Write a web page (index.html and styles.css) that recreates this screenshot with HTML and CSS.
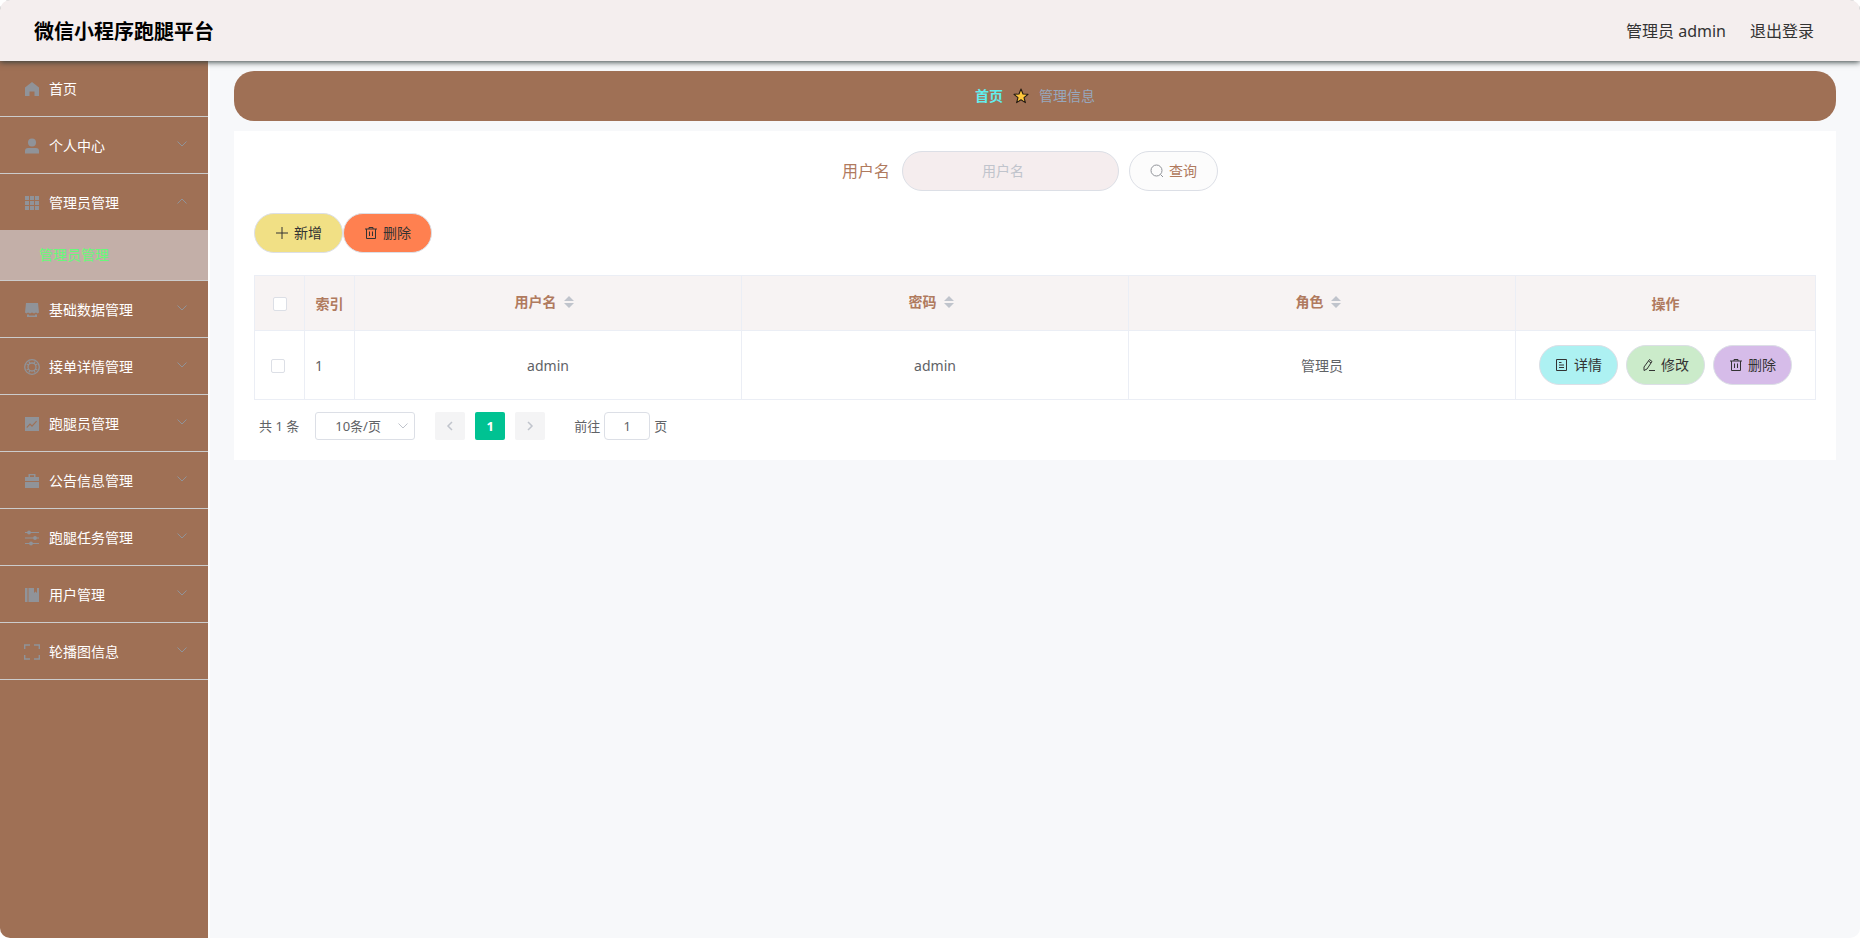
FILE: index.html
```html
<!DOCTYPE html>
<html lang="zh-CN">
<head>
<meta charset="utf-8">
<title>微信小程序跑腿平台</title>
<link rel="stylesheet" href="styles.css">
</head>
<body>
<svg class="defs" aria-hidden="true">
  <symbol id="down" viewBox="0 0 12 12"><path d="M1.500 3.500 6 8l4.500-4.500" fill="none" stroke="currentColor"/></symbol>
  <symbol id="trash" viewBox="0 0 14 14"><path d="M1 3h12M5 3V1.500h4V3M2.500 3v9.500h9V3M5.500 5.500v4.500M8.500 5.500v4.500" fill="none" stroke="currentColor"/></symbol>
</svg>
<div class="app">
  <header class="header">
    <h1 class="brand">微信小程序跑腿平台</h1>
    <div class="account"><span>管理员 admin</span><a href="#logout">退出登录</a></div>
  </header>
  <div class="layout">
    <nav class="sidebar">
      <a class="item first" href="#home"><svg class="icon" viewBox="0 0 16 16"><path d="M8 1 1 6.500V15h4.500v-4.500h5V15H15V6.500z" fill="currentColor"/></svg><span class="label">首页</span></a>
      <a class="item" href="#profile"><svg class="icon" viewBox="0 0 16 16"><circle cx="8" cy="4.500" r="4" fill="currentColor"/><path d="M1 15.500V13q0-3 3-3h8q3 0 3 3v2.500z" fill="currentColor"/></svg><span class="label">个人中心</span><svg class="arrow"><use href="#down"/></svg></a>
      <a class="item open" href="#admins"><svg class="icon" viewBox="0 0 16 16"><path d="M1 1h4v4H1zM6 1h4v4H6zM11 1h4v4h-4zM1 6h4v4H1zM6 6h4v4H6zM11 6h4v4h-4zM1 11h4v4H1zM6 11h4v4H6zM11 11h4v4h-4z" fill="currentColor"/></svg><span class="label">管理员管理</span><svg class="arrow up"><use href="#down"/></svg></a>
      <a class="subitem" href="#admin-list">管理员管理</a>
      <a class="item" href="#base"><svg class="icon" viewBox="0 0 16 16"><path d="M2 1h12l1 9.500-1.500 1-1.500-1-2 1-2-1-2 1-2-1-1.500 1L1 10.500zM3 12.500h2v1h6v-1h2V15H3z" fill="currentColor"/></svg><span class="label">基础数据管理</span><svg class="arrow"><use href="#down"/></svg></a>
      <a class="item" href="#orders"><svg class="icon" viewBox="0 0 16 16"><g fill="none" stroke="currentColor" stroke-width="1.300"><circle cx="8" cy="8" r="7.300"/><circle cx="8" cy="8" r="4"/><path d="M2.500 5 5 6M5 2.500 6 5M11 2.500 10 5M13.500 5 11 6M13.500 11 11 10M11 13.500 10 11M5 13.500 6 11M2.500 11 5 10"/></g></svg><span class="label">接单详情管理</span><svg class="arrow"><use href="#down"/></svg></a>
      <a class="item" href="#runners"><svg class="icon" viewBox="0 0 16 16"><path fill-rule="evenodd" d="M1 1h14v14H1zM3 12l3-3 2 2 5-5.500-.8-.8L8 9.300l-2-2L2.500 11z" fill="currentColor"/></svg><span class="label">跑腿员管理</span><svg class="arrow"><use href="#down"/></svg></a>
      <a class="item" href="#notices"><svg class="icon" viewBox="0 0 16 16"><path fill-rule="evenodd" d="M4.500 4V1h7v3H15v4H1V4zM6 4h4V2.300H6zM1 9h14v6H1z" fill="currentColor"/></svg><span class="label">公告信息管理</span><svg class="arrow"><use href="#down"/></svg></a>
      <a class="item" href="#tasks"><svg class="icon" viewBox="0 0 16 16"><path d="M1 2.500h14M1 8h14M1 13.500h14" stroke="currentColor" stroke-width="1.200"/><g fill="currentColor"><circle cx="5" cy="2.500" r="1.900"/><circle cx="11" cy="8" r="1.900"/><circle cx="7" cy="13.500" r="1.900"/></g></svg><span class="label">跑腿任务管理</span><svg class="arrow"><use href="#down"/></svg></a>
      <a class="item" href="#users"><svg class="icon" viewBox="0 0 16 16"><path d="M1 1h2.500v14H1zM4.500 1H10v5l1.500-1.500L13 6V1h2v14H4.500z" fill="currentColor"/></svg><span class="label">用户管理</span><svg class="arrow"><use href="#down"/></svg></a>
      <a class="item" href="#carousel"><svg class="icon" viewBox="0 0 16 16"><path d="M.7 5V1H6M10 1h5.300v4M15.300 11v4H10M6 15H.7v-4" fill="none" stroke="currentColor" stroke-width="1.400"/></svg><span class="label">轮播图信息</span><svg class="arrow"><use href="#down"/></svg></a>
    </nav>
    <main class="main">
      <div class="crumbs"><a href="#home">首页</a><svg class="star" viewBox="0 0 16 16"><path d="m8 1 2 5 5 .3-4 3.300 1.400 5L8 11.800l-4.400 2.800 1.400-5-4-3.300L6 6z" fill="#ffc83d" stroke="#231a12" stroke-width="1.100" stroke-linejoin="round"/></svg><span>管理信息</span></div>
      <section class="card">
        <form class="search">
          <label for="name">用户名</label>
          <input id="name" class="field" type="text" placeholder="用户名">
          <button class="btn query" type="button"><svg viewBox="0 0 14 14"><circle cx="6.500" cy="6.500" r="5.500" fill="none" stroke="currentColor"/><path d="m10.500 10.500 2.500 2.500" stroke="currentColor"/></svg>查询</button>
        </form>
        <div class="tools">
          <button class="btn add" type="button"><svg viewBox="0 0 14 14"><path d="M7 1v12M1 7h12" stroke="currentColor"/></svg>新增</button>
          <button class="btn del" type="button"><svg><use href="#trash"/></svg>删除</button>
        </div>
        <table class="table">
          <colgroup><col class="narrow"><col class="narrow"><col><col><col><col class="wide"></colgroup>
          <thead>
            <tr>
              <th><input class="check" type="checkbox" aria-label="全选"></th>
              <th>索引</th>
              <th><span class="sort">用户名<svg viewBox="0 0 10 14"><path d="M5 1l5 5H0zM0 8h10l-5 5z" fill="currentColor"/></svg></span></th>
              <th><span class="sort">密码<svg viewBox="0 0 10 14"><path d="M5 1l5 5H0zM0 8h10l-5 5z" fill="currentColor"/></svg></span></th>
              <th><span class="sort">角色<svg viewBox="0 0 10 14"><path d="M5 1l5 5H0zM0 8h10l-5 5z" fill="currentColor"/></svg></span></th>
              <th>操作</th>
            </tr>
          </thead>
          <tbody>
            <tr>
              <td class="pick"><input class="check" type="checkbox" aria-label="选择第1行"></td>
              <td class="index">1</td>
              <td>admin</td>
              <td>admin</td>
              <td>管理员</td>
              <td class="ops">
                <div class="actions">
                  <button class="btn view" type="button"><svg viewBox="0 0 14 14"><path d="M1.500 1.500h10v11h-10zM4 4.500h2.500M4 7h5M4 9.500h5" fill="none" stroke="currentColor"/></svg>详情</button>
                  <button class="btn edit" type="button"><svg viewBox="0 0 14 14"><path d="M2 9 7.500 1.500l2.500 2L5 11l-3 1.500zM6.500 3l2.500 2M7 12.500h6" fill="none" stroke="currentColor"/></svg>修改</button>
                  <button class="btn remove" type="button"><svg><use href="#trash"/></svg>删除</button>
                </div>
              </td>
            </tr>
          </tbody>
        </table>
        <div class="pager">
          <span class="total">共 1 条</span>
          <span class="sizes"><select aria-label="每页条数"><option>10条/页</option></select><svg class="caret"><use href="#down"/></svg></span>
          <div class="pages">
            <button type="button" disabled aria-label="上一页"><svg viewBox="0 0 12 12"><path d="M8 2 4 6l4 4" fill="none" stroke="currentColor" stroke-width="1.500"/></svg></button>
            <button class="current" type="button">1</button>
            <button type="button" disabled aria-label="下一页"><svg viewBox="0 0 12 12"><path d="m4 2 4 4-4 4" fill="none" stroke="currentColor" stroke-width="1.500"/></svg></button>
          </div>
          <label class="jump">前往<input type="text" value="1">页</label>
        </div>
      </section>
    </main>
  </div>
</div>
</body>
</html>
```
FILE: styles.css
```css
* { box-sizing: border-box; }

body {
  margin: 0;
  background: #fff;
  color: #333;
  font: 14px/20px "Noto Sans", "Noto Sans CJK SC", sans-serif;
}

a { color: inherit; text-decoration: none; }
button, input, select { font: inherit; color: inherit; }
.defs { position: absolute; width: 0; height: 0; }

.app {
  display: flex;
  flex-direction: column;
  min-height: 100vh;
  border-radius: 10px;
  overflow: hidden;
}

.header {
  z-index: 1;
  display: flex;
  align-items: center;
  justify-content: space-between;
  height: 61px;
  padding: 0 46px 0 34px;
  background: #f4eeee;
  box-shadow: 0 1px 6px #2f3b3b;
}
.brand { margin: 0; padding-top: 3px; color: #000; font-size: 20px; line-height: 28px; }
.account { display: flex; gap: 24px; font-size: 16px; line-height: 24px; }

.layout { flex: 1; display: flex; }

.sidebar {
  flex: none;
  width: 208px;
  background: #9f7055;
  color: #fff;
}
.item {
  display: flex;
  align-items: center;
  height: 57px;
  padding: 2px 20px 0 24px;
  border-bottom: 1px solid #ccc;
}
.item.first { height: 56px; padding-top: 0; }
.item.open { height: 56px; border-bottom: 0; }
.icon { width: 16px; height: 16px; margin-right: 9px; color: #909399; }
.label { flex: 1; }
.arrow { width: 12px; height: 12px; margin-bottom: 4px; color: #909399; }
.arrow.up { transform: rotate(180deg); }
.subitem {
  display: flex;
  align-items: center;
  height: 51px;
  padding-left: 39px;
  border-bottom: 1px solid #ccc;
  background: #c3afa8;
  color: #66fa78;
}

.main {
  flex: 1;
  min-width: 0;
  margin-left: 2px;
  padding: 10px 24px;
  background: #f7f8fa;
}

.crumbs {
  display: flex;
  align-items: center;
  justify-content: center;
  gap: 10px;
  height: 50px;
  margin-bottom: 10px;
  border-radius: 20px;
  background: #9f7055;
  color: #97a8be;
}
.crumbs a { color: #62eeee; font-weight: 700; }
.star { width: 16px; height: 16px; }

.card { padding: 20px; background: #fff; }

.search {
  display: flex;
  align-items: center;
  justify-content: center;
  gap: 10px;
  margin-bottom: 22px;
  padding-right: 10px;
}
.search label { color: #b07a5e; font-size: 16px; line-height: 24px; padding-right: 2px; }
.field {
  width: 217px;
  height: 40px;
  padding: 0 30px 2px 15px;
  border: 1px solid #dcdfe6;
  border-radius: 20px;
  background: #f5edee;
  text-align: center;
}
.field::placeholder { color: #c0c4cc; }

.btn {
  display: flex;
  align-items: center;
  justify-content: center;
  gap: 5px;
  width: 89px;
  height: 40px;
  padding: 0;
  border: 1px solid #dcdfe6;
  border-radius: 20px;
  color: #333;
}
.btn svg { width: 14px; height: 14px; }
.query { background: #fcfcfc; color: #b07a5e; }
.query svg { color: #909399; }
.tools { display: flex; margin-bottom: 22px; }
.add { background: #f1e085; }
.del { background: #ff8050; }
.actions { display: flex; justify-content: center; gap: 8px; }
.actions .btn { width: 79px; }
.view { background: #adf1f2; }
.edit { background: #cbebca; }
.remove { background: #d6bce9; }

.table {
  width: 100%;
  table-layout: fixed;
  border-collapse: collapse;
  color: #606266;
  text-align: center;
}
.narrow { width: 50px; }
.wide { width: 300px; }
.table th, .table td { padding: 2px 0 0; border: 1px solid #ebeef5; }
.table th { height: 55px; background: #f7f3f3; color: #b07a5e; }
.table td { height: 69px; }
.table .index { padding-left: 10px; text-align: left; }
.table .pick { padding-right: 4px; }
.table .ops { padding-top: 0; }
.sort { display: flex; align-items: center; justify-content: center; gap: 7px; padding: 0 8px 4px 0; }
.sort svg { width: 10px; height: 14px; color: #c0c4cc; }
.check {
  appearance: none;
  display: block;
  width: 14px;
  height: 14px;
  margin: 0 auto;
  border: 1px solid #dcdfe6;
  border-radius: 2px;
  background: #fff;
}

.pager {
  display: flex;
  align-items: center;
  padding: 12px 5px 0;
  color: #606266;
  font-size: 13px;
}
.total { margin-right: 16px; }
.sizes { display: grid; align-items: center; margin-right: 20px; }
.sizes > * { grid-area: 1 / 1; }
.sizes select {
  appearance: none;
  width: 100px;
  height: 28px;
  padding: 0 0 0 19px;
  border: 1px solid #dcdfe6;
  border-radius: 3px;
  background: #fff;
}
.caret { justify-self: end; width: 12px; height: 12px; margin-right: 6px; color: #c0c4cc; pointer-events: none; }
.pages { display: flex; gap: 10px; margin-right: 29px; }
.pages button {
  display: grid;
  place-items: center;
  width: 30px;
  height: 28px;
  padding: 0;
  border: 0;
  border-radius: 2px;
  background: #f4f4f5;
  color: #c0c4cc;
}
.pages svg { width: 12px; height: 12px; }
.pages .current { background: #00c292; color: #fff; font-weight: 700; }
.jump input {
  width: 46px;
  height: 28px;
  margin: 0 4px;
  padding: 0;
  border: 1px solid #dcdfe6;
  border-radius: 4px;
  background: #fff;
  text-align: center;
}
```
